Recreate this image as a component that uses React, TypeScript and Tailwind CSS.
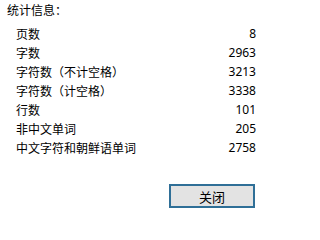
import React from "react";

const rows: [string, string][] = [
  ["页数", "8"],
  ["字数", "2963"],
  ["字符数（不计空格）", "3213"],
  ["字符数（计空格）", "3338"],
  ["行数", "101"],
  ["非中文单词", "205"],
  ["中文字符和朝鲜语单词", "2758"],
];

export default function App() {
  return (
    <div
      className="w-[282px] h-[225px] bg-white text-black text-[12px] flex flex-col"
      style={{ fontFamily: '"Noto Sans CJK SC", "Noto Sans", sans-serif' }}
    >
      <div className="pl-[7px] h-[19px] leading-[19px]">统计信息：</div>
      <div className="mt-[5px] pl-[16px] pr-[26px] flex flex-col">
        {rows.map(([k, v]) => (
          <div key={k} className="flex justify-between h-[19px] leading-[19px]">
            <span>{k}</span>
            <span style={{ fontFamily: '"Noto Sans", sans-serif' }}>{v}</span>
          </div>
        ))}
      </div>
      <div className="mt-[27px] pl-[169px]">
        <button className="w-[86px] h-[24px] border-2 border-[#2f6f97] bg-[#e3e3e3] flex items-center justify-center text-[13px] leading-none">
          关闭
        </button>
      </div>
    </div>
  );
}
